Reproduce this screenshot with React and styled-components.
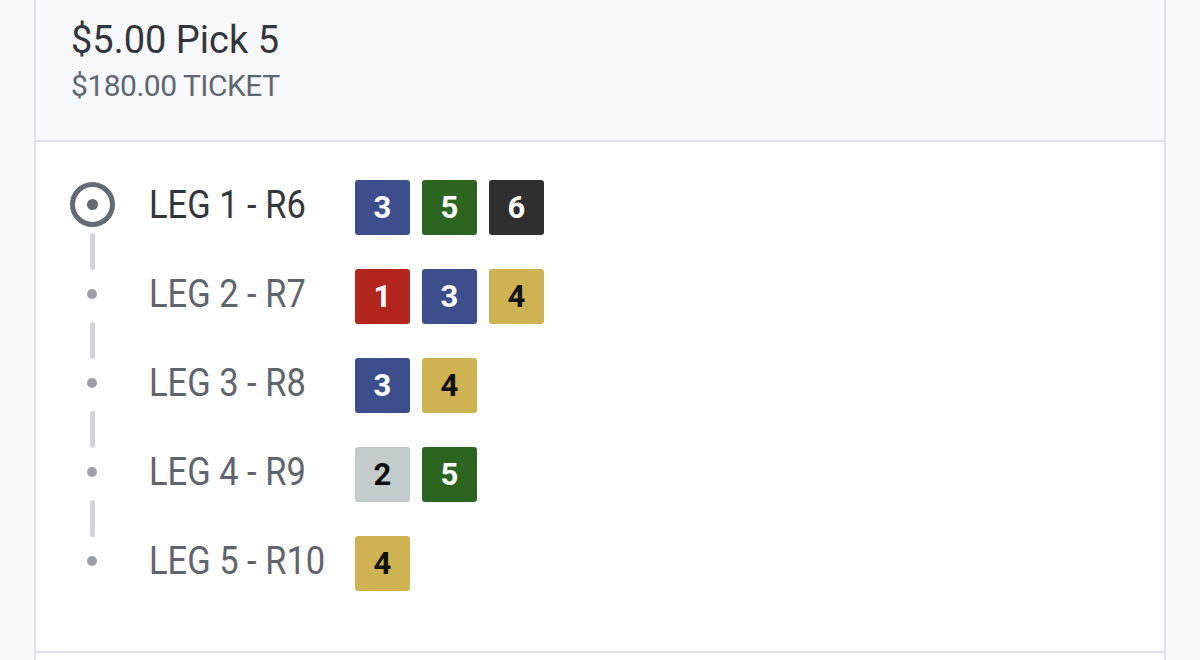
import React from "react";
import styled, { createGlobalStyle } from "styled-components";

const Global = createGlobalStyle`
  html, body { margin: 0; padding: 0; background: #fbfbfc; }
  body { font-family: Roboto, "Noto Sans", sans-serif; }
  * { box-sizing: border-box; }
`;

const Page = styled.div`
  width: 1200px;
  height: 660px;
  overflow: hidden;
  padding: 0 34px;
`;

const Card = styled.div`
  border-left: 2px solid #dfe2ee;
  border-right: 2px solid #dfe2ee;
  background: #ffffff;
`;

const Header = styled.div`
  background: #f7f8fc;
  padding: 18px 35px 36px;
  border-bottom: 2px solid #dfe2ee;
  display: flex;
  flex-direction: column;
  gap: 6px;
`;

const Title = styled.div`
  font-size: 38px;
  line-height: 44px;
  color: #33363b;
  font-weight: 400;
`;

const Subtitle = styled.div`
  font-size: 30px;
  line-height: 36px;
  color: #62676f;
  letter-spacing: -0.5px;
`;

const Body = styled.div`
  padding: 38px 0 60px 33px;
  display: flex;
  flex-direction: column;
  gap: 34px;
  border-bottom: 2px solid #dfe2ee;
`;

const Row = styled.div`
  display: grid;
  grid-template-columns: 46px 172px 1fr;
  column-gap: 34px;
  align-items: center;
  height: 55px;
`;

const Marker = styled.div`
  position: relative;
  height: 55px;
  display: flex;
  align-items: center;
  justify-content: center;
  &::after {
    content: "";
    display: ${(p) => (p.$last ? "none" : "block")};
    position: absolute;
    left: 20.5px;
    top: 53px;
    width: 5px;
    height: 37px;
    border-radius: 3px;
    background: #d3d5d9;
  }
`;

const Ring = styled.div`
  width: 45px;
  height: 45px;
  border-radius: 50%;
  border: 5px solid #646a73;
  display: flex;
  align-items: center;
  justify-content: center;
  margin-top: -6px;
  &::before {
    content: "";
    width: 11px;
    height: 11px;
    border-radius: 50%;
    background: #646a73;
  }
`;

const Dot = styled.div`
  width: 10px;
  height: 10px;
  border-radius: 50%;
  background: #9c9fa5;
  margin-top: -5px;
`;

const Label = styled.div`
  font-size: 38.5px;
  line-height: 44px;
  white-space: nowrap;
  color: ${(p) => (p.$active ? "#33363b" : "#60656d")};
  margin-top: -6px;
  span {
    display: inline-block;
    transform: scaleX(0.895);
    transform-origin: left center;
  }
`;

const Badges = styled.div`
  display: flex;
  gap: 12px;
`;

const Badge = styled.div`
  width: 55px;
  height: 55px;
  border-radius: 3px;
  background: ${(p) => p.$bg};
  color: ${(p) => p.$fg};
  display: flex;
  align-items: center;
  justify-content: center;
  font-weight: 700;
  font-size: 31px;
  font-family: Roboto, "Noto Sans", sans-serif;
`;

const NextSection = styled.div`
  height: 20px;
  background: #ffffff;
`;

const COLORS = {
  1: ["#b2261e", "#ffffff"],
  2: ["#c3cbcd", "#111111"],
  3: ["#3c4e8c", "#ffffff"],
  4: ["#cfb352", "#111111"],
  5: ["#2b6520", "#ffffff"],
  6: ["#2f2f2f", "#ffffff"],
};

const legs = [
  { name: "LEG 1 - R6", picks: [3, 5, 6] },
  { name: "LEG 2 - R7", picks: [1, 3, 4] },
  { name: "LEG 3 - R8", picks: [3, 4] },
  { name: "LEG 4 - R9", picks: [2, 5] },
  { name: "LEG 5 - R10", picks: [4] },
];

export default function App() {
  return (
    <>
      <Global />
      <Page>
        <Card>
          <Header>
            <Title>$5.00 Pick 5</Title>
            <Subtitle>$180.00 TICKET</Subtitle>
          </Header>
          <Body>
            {legs.map((leg, i) => (
              <Row key={leg.name}>
                <Marker $last={i === legs.length - 1}>
                  {i === 0 ? <Ring /> : <Dot />}
                </Marker>
                <Label $active={i === 0}>
                  <span>{leg.name}</span>
                </Label>
                <Badges>
                  {leg.picks.map((n) => (
                    <Badge key={n} $bg={COLORS[n][0]} $fg={COLORS[n][1]}>
                      {n}
                    </Badge>
                  ))}
                </Badges>
              </Row>
            ))}
          </Body>
          <NextSection />
        </Card>
      </Page>
    </>
  );
}
